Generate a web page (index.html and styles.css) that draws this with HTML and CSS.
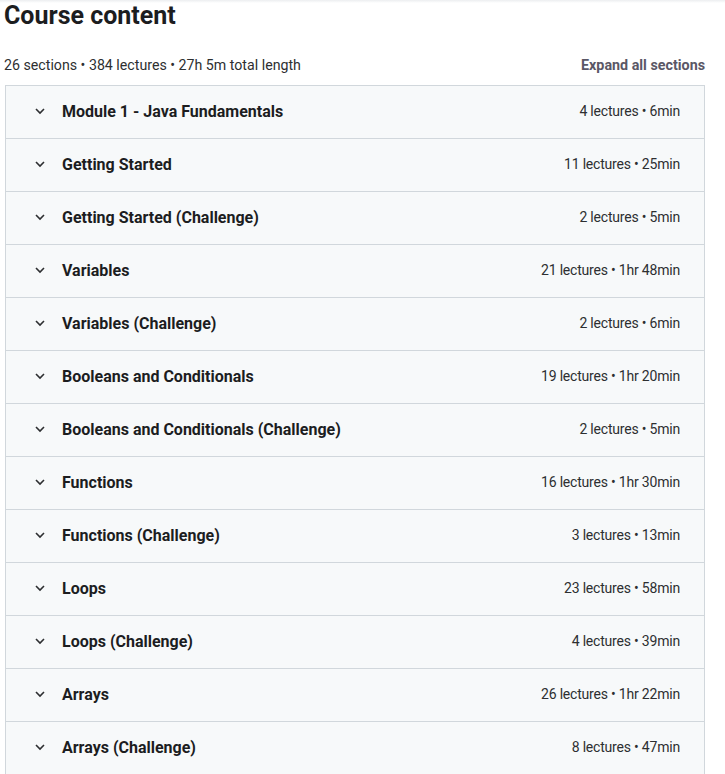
FILE: index.html
```html
<!DOCTYPE html>
<html>
<head>
<meta charset="utf-8">
<link rel="stylesheet" href="styles.css">
</head>
<body>
<div class="topbar"></div>
<div class="page">
  <h2 class="title">Course content</h2>
  <div class="meta">
    <span class="stats">26 sections • 384 lectures • 27h 5m total length</span>
    <span class="expand">Expand all sections</span>
  </div>
  <div class="sections">
    <div class="row"><svg class="chev" viewBox="0 0 12 12"><path d="M2 4 L6 8 L10 4"/></svg><span class="name">Module 1 - Java Fundamentals</span><span class="info">4 lectures • 6min</span></div>
    <div class="row"><svg class="chev" viewBox="0 0 12 12"><path d="M2 4 L6 8 L10 4"/></svg><span class="name">Getting Started</span><span class="info">11 lectures • 25min</span></div>
    <div class="row"><svg class="chev" viewBox="0 0 12 12"><path d="M2 4 L6 8 L10 4"/></svg><span class="name">Getting Started (Challenge)</span><span class="info">2 lectures • 5min</span></div>
    <div class="row"><svg class="chev" viewBox="0 0 12 12"><path d="M2 4 L6 8 L10 4"/></svg><span class="name">Variables</span><span class="info">21 lectures • 1hr 48min</span></div>
    <div class="row"><svg class="chev" viewBox="0 0 12 12"><path d="M2 4 L6 8 L10 4"/></svg><span class="name">Variables (Challenge)</span><span class="info">2 lectures • 6min</span></div>
    <div class="row"><svg class="chev" viewBox="0 0 12 12"><path d="M2 4 L6 8 L10 4"/></svg><span class="name">Booleans and Conditionals</span><span class="info">19 lectures • 1hr 20min</span></div>
    <div class="row"><svg class="chev" viewBox="0 0 12 12"><path d="M2 4 L6 8 L10 4"/></svg><span class="name">Booleans and Conditionals (Challenge)</span><span class="info">2 lectures • 5min</span></div>
    <div class="row"><svg class="chev" viewBox="0 0 12 12"><path d="M2 4 L6 8 L10 4"/></svg><span class="name">Functions</span><span class="info">16 lectures • 1hr 30min</span></div>
    <div class="row"><svg class="chev" viewBox="0 0 12 12"><path d="M2 4 L6 8 L10 4"/></svg><span class="name">Functions (Challenge)</span><span class="info">3 lectures • 13min</span></div>
    <div class="row"><svg class="chev" viewBox="0 0 12 12"><path d="M2 4 L6 8 L10 4"/></svg><span class="name">Loops</span><span class="info">23 lectures • 58min</span></div>
    <div class="row"><svg class="chev" viewBox="0 0 12 12"><path d="M2 4 L6 8 L10 4"/></svg><span class="name">Loops (Challenge)</span><span class="info">4 lectures • 39min</span></div>
    <div class="row"><svg class="chev" viewBox="0 0 12 12"><path d="M2 4 L6 8 L10 4"/></svg><span class="name">Arrays</span><span class="info">26 lectures • 1hr 22min</span></div>
    <div class="row"><svg class="chev" viewBox="0 0 12 12"><path d="M2 4 L6 8 L10 4"/></svg><span class="name">Arrays (Challenge)</span><span class="info">8 lectures • 47min</span></div>
  </div>
</div>
</body>
</html>
```
FILE: styles.css
```css
* { box-sizing: border-box; }
html, body { margin: 0; padding: 0; background: #fff; }
body {
  font-family: Roboto, "Liberation Sans", Arial, sans-serif;
  color: #2d2f31;
  position: relative;
}
.topbar {
  position: absolute;
  left: 0; right: 0; top: 0;
  height: 3px;
  background: linear-gradient(#eceef0, #fff);
}
.page {
  width: 705px;
  padding-left: 5px;
}
.title {
  margin: 0 0 0 -1px;
  padding-top: 1px;
  font-size: 25px;
  line-height: 30px;
  font-weight: 700;
  color: #1c1d1f;
}
.meta {
  display: flex;
  justify-content: space-between;
  align-items: center;
  margin: 25px 0 0 -1px;
  height: 18px;
  font-size: 14.2px;
}
.expand {
  font-weight: 700;
  color: #5a5766;
  font-size: 14.3px;
}
.sections {
  margin-top: 11px;
  border: 1px solid #d1d7dc;
  border-bottom: none;
}
.row {
  display: flex;
  align-items: center;
  height: 53px;
  background: #f7f9fa;
  border-bottom: 1px solid #d1d7dc;
  padding: 0 24px 2px 28px;
}
.chev {
  width: 12px;
  height: 12px;
  fill: none;
  stroke: #2d2f31;
  stroke-width: 1.6;
  margin-right: 16px;
  flex: none;
}
.name {
  flex: 1;
  font-weight: 700;
  font-size: 16px;
  color: #1c1d1f;
}
.info {
  font-size: 14px;
  letter-spacing: -0.2px;
}
```
